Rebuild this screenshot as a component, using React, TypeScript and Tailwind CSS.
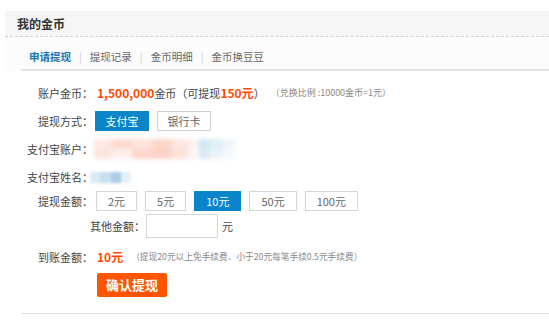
import React from "react";

const font = { fontFamily: '"Noto Sans CJK SC", "Noto Sans", sans-serif' };

function Label({ children }: { children: React.ReactNode }) {
  return <div className="w-[93px] shrink-0 text-right text-[11px] text-[#444]">{children}</div>;
}

export default function App() {
  const tabs = ["申请提现", "提现记录", "金币明细", "金币换豆豆"];
  const amounts = ["2元", "5元", "10元", "50元", "100元"];

  return (
    <div className="w-[549px] h-[320px] bg-white overflow-hidden pt-[11px]" style={font}>
      {/* Header */}
      <div className="ml-[5px] h-[26px] bg-[#f6f6f6] border-b border-dashed border-[#d4d4d4] flex items-center pl-[12px]">
        <span className="text-[12px] font-bold text-[#333]">我的金币</span>
      </div>

      {/* Tabs */}
      <div className="ml-[5px] bg-[#fcfcfc] pl-[16px]">
        <div className="h-[34px] border-b-2 border-[#e2e2e2] flex items-center pl-[8px] pt-[7px] text-[10.5px]">
          {tabs.map((t, i) => (
            <React.Fragment key={t}>
              {i > 0 && <span className="mx-[8px] text-[#ccc]">|</span>}
              <span className={i === 0 ? "font-bold text-[#1677b3]" : "text-[#666]"}>{t}</span>
            </React.Fragment>
          ))}
        </div>
      </div>

      {/* Form */}
      <div className="flex flex-col pt-[8px]">
        <div className="h-[28px] flex items-center">
          <Label>账户金币：</Label>
          <div className="pl-[4px] flex items-center text-[11px] text-[#444]">
            <span className="font-bold text-[#ff4a00] text-[12px]">1,500,000</span>
            <span>金币（可提现</span>
            <span className="font-bold text-[#ff4a00] text-[12px]">150元</span>
            <span>）</span>
            <span className="ml-[6px] text-[9px] text-[#888]">（兑换比例 :10000金币=1元）</span>
          </div>
        </div>

        <div className="h-[28px] flex items-center">
          <Label>提现方式：</Label>
          <div className="pl-[2px] flex gap-[8px]">
            <button className="w-[54px] h-[20px] bg-[#0a85c9] border border-[#0a85c9] text-white text-[11px]">支付宝</button>
            <button className="w-[54px] h-[20px] bg-white border border-[#d0d0d0] text-[#666] text-[11px]">银行卡</button>
          </div>
        </div>

        <div className="h-[28px] flex items-center">
          <Label>支付宝账户：</Label>
          <div className="ml-[1px] flex items-center blur-[2px]">
            <div className="flex flex-col">
              <div className="flex">
                <div className="w-[18px] h-[10px] bg-[#fde8e4]" />
                <div className="w-[20px] h-[10px] bg-[#fcd9d0]" />
                <div className="w-[20px] h-[10px] bg-[#fde3dc]" />
                <div className="w-[20px] h-[10px] bg-[#fcd5cb]" />
                <div className="w-[16px] h-[10px] bg-[#fde6e0]" />
                <div className="w-[8px] h-[10px] bg-[#fff2ef]" />
              </div>
              <div className="flex">
                <div className="w-[18px] h-[10px] bg-[#fde6e1]" />
                <div className="w-[20px] h-[10px] bg-[#fff0ec]" />
                <div className="w-[20px] h-[10px] bg-[#fcd6cc]" />
                <div className="w-[20px] h-[10px] bg-[#fcd3c8]" />
                <div className="w-[16px] h-[10px] bg-[#fde1da]" />
                <div className="w-[8px] h-[10px] bg-[#fff5f3]" />
              </div>
            </div>
            <div className="ml-[2px] flex flex-col">
              <div className="flex">
                <div className="w-[12px] h-[10px] bg-[#d2e6f3]" />
                <div className="w-[13px] h-[10px] bg-[#e1eef7]" />
                <div className="w-[12px] h-[10px] bg-[#eef5fa]" />
              </div>
              <div className="flex">
                <div className="w-[12px] h-[10px] bg-[#dcebf5]" />
                <div className="w-[13px] h-[10px] bg-[#eaf3f9]" />
                <div className="w-[12px] h-[10px] bg-[#f5f9fc]" />
              </div>
            </div>
          </div>
        </div>

        <div className="h-[28px] flex items-center">
          <Label>支付宝姓名：</Label>
          <div className="-ml-[3px] flex blur-[1.5px]">
            <div className="w-[10px] h-[11px] bg-[#d9eaf5]" />
            <div className="w-[11px] h-[11px] bg-[#c6def0]" />
            <div className="w-[10px] h-[11px] bg-[#a9cde6]" />
            <div className="w-[10px] h-[11px] bg-[#e6f0f8]" />
          </div>
        </div>

        <div className="h-[20px] flex items-center">
          <Label>提现金额：</Label>
          <div className="pl-[3px] flex gap-[8px]">
            {amounts.map((a) => (
              <button
                key={a}
                className={
                  a === "10元"
                    ? "h-[20px] min-w-[40px] px-[11px] bg-[#0a85c9] border border-[#0a85c9] text-white text-[11px]"
                    : "h-[20px] min-w-[40px] px-[11px] bg-white border border-[#d6d6d6] text-[#666] text-[11px]"
                }
              >
                {a}
              </button>
            ))}
          </div>
        </div>

        <div className="mt-[3px] h-[24px] flex items-center">
          <div className="w-[146px] shrink-0 pr-[1px] text-right text-[11px] text-[#444]">其他金额：</div>
          <div className="w-[72px] h-[24px] border border-[#d6d6d6] bg-white" />
          <span className="ml-[4px] text-[11px] text-[#444]">元</span>
        </div>

        <div className="mt-[5px] h-[28px] flex items-center">
          <Label>到账金额：</Label>
          <span className="pl-[4px] font-bold text-[#ff4a00] text-[12px]">10元</span>
          <span className="ml-[8px] text-[8.7px] text-[#888]">（提现20元以上免手续费、小于20元每笔手续0.5元手续费）</span>
        </div>

        <div className="pl-[97px]">
          <button className="w-[70px] h-[24px] rounded-[2px] bg-[#ff5500] text-white text-[13px] font-bold">确认提现</button>
        </div>

        <div className="ml-[21px] mt-[16px] border-t border-[#e0e0e0]" />
      </div>
    </div>
  );
}
